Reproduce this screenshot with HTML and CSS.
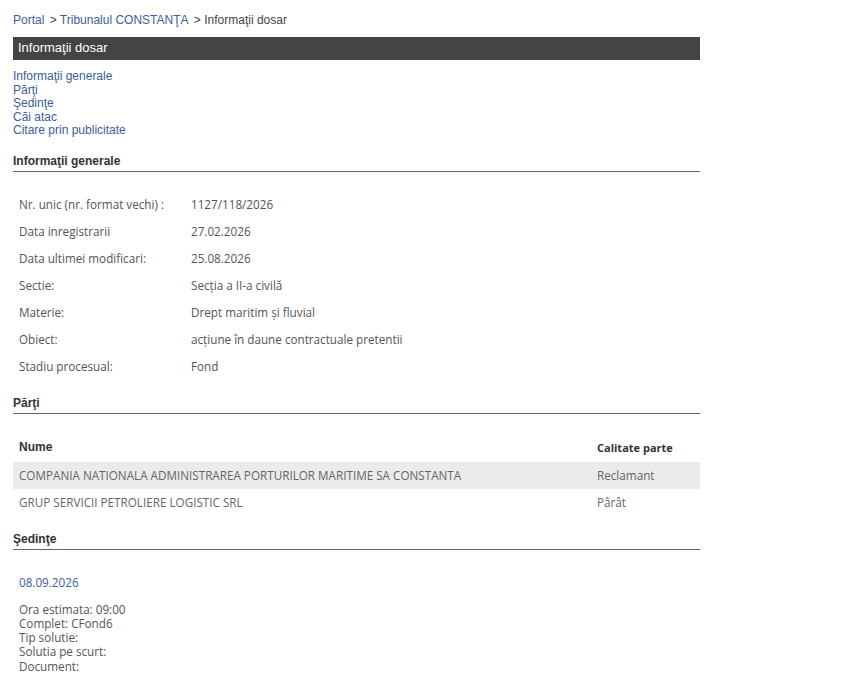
FILE: index.html
```html
<!doctype html>
<html lang="ro">
<head>
<meta charset="utf-8">
<title>Informaţii dosar</title>
<link rel="stylesheet" href="styles.css">
</head>
<body>
<div class="page">
  <div class="crumbs">
    <a href="#">Portal</a> &gt; <a href="#">Tribunalul CONSTANŢA</a> &gt; Informaţii dosar
  </div>

  <div class="titlebar">Informaţii dosar</div>

  <ul class="toc">
    <li><a href="#gen">Informaţii generale</a></li>
    <li><a href="#parti">Părţi</a></li>
    <li><a href="#sedinte">Şedinţe</a></li>
    <li><a href="#cai">Căi atac</a></li>
    <li><a href="#citare">Citare prin publicitate</a></li>
  </ul>

  <h2 id="gen">Informaţii generale</h2>
  <table class="info">
    <tr><td class="lbl">Nr. unic (nr. format vechi) :</td><td>1127/118/2026</td></tr>
    <tr><td class="lbl">Data inregistrarii</td><td>27.02.2026</td></tr>
    <tr><td class="lbl">Data ultimei modificari:</td><td>25.08.2026</td></tr>
    <tr><td class="lbl">Sectie:</td><td>Secţia a II-a civilă</td></tr>
    <tr><td class="lbl">Materie:</td><td>Drept maritim şi fluvial</td></tr>
    <tr><td class="lbl">Obiect:</td><td>acţiune în daune contractuale pretentii</td></tr>
    <tr><td class="lbl">Stadiu procesual:</td><td>Fond</td></tr>
  </table>

  <h2 id="parti">Părţi</h2>
  <table class="parties">
    <thead>
      <tr><th class="name">Nume</th><th class="role">Calitate parte</th></tr>
    </thead>
    <tbody>
      <tr class="odd"><td>COMPANIA NATIONALA ADMINISTRAREA PORTURILOR MARITIME SA CONSTANTA</td><td>Reclamant</td></tr>
      <tr><td>GRUP SERVICII PETROLIERE LOGISTIC SRL</td><td>Pârât</td></tr>
    </tbody>
  </table>

  <h2 id="sedinte">Şedinţe</h2>
  <div class="hearing">
    <div class="date">08.09.2026</div>
    <div class="details">
      Ora estimata: 09:00<br>
      Complet: CFond6<br>
      Tip solutie:<br>
      Solutia pe scurt:<br>
      Document:
    </div>
  </div>
</div>
</body>
</html>
```

FILE: styles.css
```css
html, body { margin: 0; padding: 0; background: #fff; }
body { font-family: Arial, "Liberation Sans", sans-serif; font-size: 12px; color: #333; }
.page { width: 687px; padding: 13px 0 0 13px; }
a { color: #3b5e9c; text-decoration: none; }

.crumbs { color: #444; line-height: 15px; }
.crumbs a { margin-right: 2px; }

.titlebar { margin-top: 9px; height: 23px; line-height: 22px; background: #444; color: #fff; font-size: 13px; padding-left: 5px; }

.toc { list-style: none; margin: 10px 0 0; padding: 0; line-height: 13.5px; }

h2 { font-size: 12px; font-weight: bold; color: #333; margin: 16px 0 0; padding-bottom: 2px; border-bottom: 1px solid #666; line-height: 15px; }

/* shared text for the data blocks */
.info, .parties td, .hearing { font-family: "Open Sans", sans-serif; font-size: 11.7px; }

.info { border-collapse: collapse; margin: 19px 0 16px; color: #555; }
.info td { height: 27px; padding: 0 6px; }
.info td.lbl { width: 160px; }

.parties { width: 100%; border-collapse: collapse; margin: 19px 0 15px; color: #666; }
.parties th { text-align: left; height: 29px; padding: 0 6px; color: #333; font-family: "Open Sans", sans-serif; font-size: 11px; }
.parties th.name { font-family: Arial, "Liberation Sans", sans-serif; font-size: 12px; }
.parties th.role { width: 97px; }
.parties td { height: 27px; padding: 0 6px; }
.parties tr.odd td { background: #ebebeb; }

.hearing { color: #555; padding: 24px 6px 0; }
.hearing .date { color: #3b5e9c; margin-bottom: 12px; }
.hearing .details { line-height: 14.3px; }
```
